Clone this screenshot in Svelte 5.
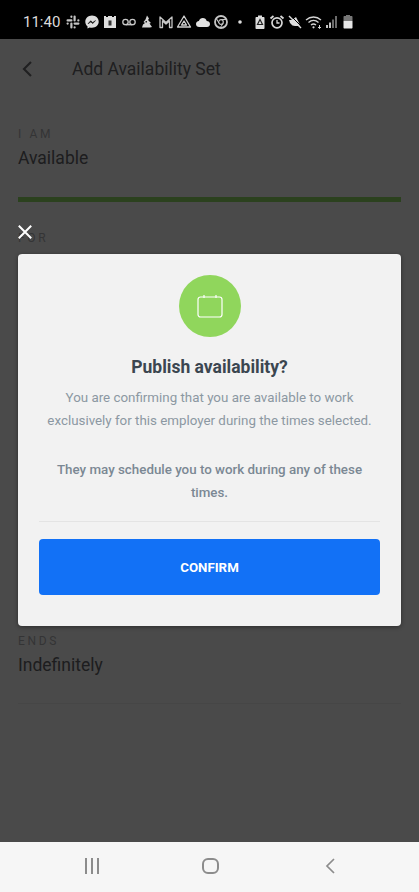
<script lang="ts">
  type Field = { label: string; value?: string };

  const topFields: Field[] = [{ label: 'I AM', value: 'Available' }];
  const modalCopy = 'You are confirming that you are available to work exclusively for this employer during the times selected.';
  const modalNote = 'They may schedule you to work during any of these times.';
</script>

<div class="phone">
  <header class="status">
    <span class="clock">11:40</span>
    <div class="notifs">
      <!-- slack -->
      <svg viewBox="0 0 16 16" fill="none" stroke="#c4c4c4" stroke-width="2.2" stroke-linecap="round"><path d="M6.400 6.400H2.600M9.600 6.400V2.600M9.600 9.600h3.800M6.400 9.600v3.800" /><path d="M6.400 2.700v.1M13.300 6.400h.1M9.600 13.300v.1M2.700 9.600h-.1" /></svg>
      <!-- messenger -->
      <svg viewBox="0 0 16 16"><path d="M8 1.500c-3.900 0-6.700 2.800-6.700 6.200 0 1.900.8 3.500 2.200 4.600v2.300l2.100-1.200c.8.200 1.600.3 2.400.3 3.900 0 6.700-2.800 6.700-6 0-3.400-2.800-6.200-6.700-6.200z" fill="#ddd" /><path d="M4 9.800l2.700-3 2 1.700 2.800-1.900-2.700 3-2-1.700z" fill="#111" stroke="#111" stroke-width=".6" /></svg>
      <!-- calendar -->
      <svg viewBox="0 0 16 16"><path d="M2 2h2v1h2V2h4v1h2V2h2v12H2z" fill="#ddd" /><rect x="6.500" y="6.500" width="3" height="5" fill="#333" /></svg>
      <!-- voicemail -->
      <svg viewBox="0 0 16 16" fill="none" stroke="#c8c8c8" stroke-width="1.300"><circle cx="4.500" cy="8" r="2.700" /><circle cx="11.500" cy="8" r="2.700" /><path d="M4.500 10.700h7" /></svg>
      <!-- app figure -->
      <svg viewBox="0 0 16 16"><path d="M8 1.500l2 3-1 1.500 3 3-1.500.5 2.500 3.500-2 .5H3l1-3 2-1.500-1.500-1 2-2.500z" fill="#d4d4d4" /><rect x="6.500" y="7" width="1.500" height="1.500" fill="#222" /></svg>
      <!-- gmail -->
      <svg viewBox="0 0 16 16" fill="none" stroke="#c8c8c8" stroke-width="1.300" stroke-linejoin="round"><path d="M2 13.500V3l6 5.500L14 3v10.500h-2.500V7L8 10 4.500 7v6.500z" /></svg>
      <!-- drive -->
      <svg viewBox="0 0 16 16" fill="none" stroke="#d0d0d0" stroke-width="1.300" stroke-linejoin="round"><path d="M8 2l6.500 11h-13zM8 7l-2.500 4h5z" /></svg>
      <!-- cloud -->
      <svg viewBox="0 0 16 16"><path d="M4.200 13C2.300 13 1 11.700 1 10s1.300-2.900 2.900-3C4.500 5 6 4 7.800 4c2 0 3.500 1.300 3.900 3.100 1.800 0 3.300 1.200 3.300 3S13.600 13 12 13z" fill="#e2e2e2" /></svg>
      <!-- chrome -->
      <svg viewBox="0 0 16 16" fill="none" stroke="#c4c4c4"><circle cx="8" cy="8" r="6" stroke-width="1.800" /><circle cx="8" cy="8" r="2.300" stroke-width="1.200" /><path d="M8 5.500h5.500M5.800 9L3.500 4.500M10 9.500L7 14" stroke-width="1" /></svg>
      <!-- dot -->
      <svg viewBox="0 0 16 16"><circle cx="8" cy="8" r="1.800" fill="#ddd" /></svg>
    </div>
    <div class="systray">
      <!-- battery saver -->
      <svg viewBox="0 0 16 16"><path d="M6 1.500h4v1.500h1.500c.6 0 1 .4 1 1v10c0 .6-.4 1-1 1h-7c-.6 0-1-.4-1-1V4c0-.6.4-1 1-1H6z" fill="#ddd" /><path d="M8 5.500l2.500 5h-5z" fill="none" stroke="#222" stroke-width="1.200" /></svg>
      <!-- alarm -->
      <svg viewBox="0 0 16 16" fill="none" stroke="#d8d8d8"><circle cx="8" cy="8.800" r="5" stroke-width="1.700" /><path d="M8 6v3h2.500" stroke-width="1.300" /><path d="M1.500 4.500l3-2.500M14.500 4.500l-3-2.500" stroke-width="1.800" /></svg>
      <!-- mute -->
      <svg viewBox="0 0 16 16"><path d="M2 6h3l4-3 4 8-1 1H8l-2.500-.5L3 9z" fill="#ddd" /><path d="M2 2l12 12" stroke="#ddd" stroke-width="1.400" /><path d="M3 1l12 12" stroke="#000" stroke-width="1" /></svg>
      <!-- wifi -->
      <svg class="wifi" viewBox="0 0 18 16" fill="none" stroke="#d4d4d4" stroke-width="1.300"><path d="M1 6c4.500-4 10.500-4 15 0M3.500 8.500c3-2.700 7-2.700 10 0M6 11c1.700-1.400 3.300-1.400 5 0" /><circle cx="8.500" cy="13.300" r="1.100" fill="#d4d4d4" stroke="none" /><path d="M14.500 11v3.500M13 13l1.500 1.500L16 13" stroke-width="1" /></svg>
      <!-- signal -->
      <svg class="signal" viewBox="0 0 14 16"><path d="M1 11h2v3H1zM4 8.500h2V14H4z" fill="#c4c4c4" /><path d="M7 5.500h2V14H7zM10 2h2v12h-2z" fill="#6c6c6c" /></svg>
      <!-- battery -->
      <svg class="battery" viewBox="0 0 10 16"><path d="M3 1h4v1h1.500c.6 0 1 .4 1 1v4H.5V3c0-.6.4-1 1-1H3z" fill="#777" /><path d="M.5 7h9v6.500c0 .6-.4 1-1 1h-7c-.6 0-1-.4-1-1z" fill="#e6e6e6" /></svg>
    </div>
  </header>

  <main class="screen">
    <div class="page">
      <div class="titlebar">
        <svg class="back" viewBox="0 0 12 18" fill="none"><path d="M10 2L3 9l7 7" stroke="#707074" stroke-width="2.200" /></svg>
        <h1>Add Availability Set</h1>
      </div>

      {#each topFields as field}
        <section class="field first">
          <span class="label">{field.label}</span>
          <span class="value">{field.value}</span>
        </section>
      {/each}
      <div class="greenbar"></div>

      <section class="field for">
        <span class="label">FOR</span>
      </section>

      <section class="field">
        <span class="label">ENDS</span>
        <span class="value">Indefinitely</span>
      </section>
      <div class="rule"></div>
    </div>

    <div class="scrim">
      <button class="close" aria-label="Close">
        <svg viewBox="0 0 14 14" fill="none"><path d="M.8.800l12.400 12.400M13.200.800L.8 13.200" stroke="#fff" stroke-width="2" /></svg>
      </button>

      <div class="modal">
        <div class="badge">
          <svg viewBox="0 0 26 24" fill="none" stroke="#fff" stroke-width="1.200"><rect x="1" y="3" width="24" height="20" rx="2.500" /><path d="M7 1v3M19 1v3" /></svg>
        </div>
        <h2>Publish availability?</h2>
        <p>{modalCopy}</p>
        <p class="note">{modalNote}</p>
        <hr />
        <button class="confirm">CONFIRM</button>
      </div>
    </div>
  </main>

  <nav class="navbar">
    <svg class="recents" viewBox="0 0 16 16" fill="none" stroke="#8c8c8c" stroke-width="2"><path d="M2 0v16M8 0v16M14 0v16" /></svg>
    <svg class="home" viewBox="0 0 17 16" fill="none"><rect x="1" y="1" width="15" height="14" rx="5" stroke="#8c8c8c" stroke-width="2" /></svg>
    <svg class="prev" viewBox="0 0 10 16" fill="none"><path d="M9 1L2 8l7 7" stroke="#8c8c8c" stroke-width="1.700" /></svg>
  </nav>
</div>

<style>
  :global(body) {
    background: #fff;
  }

  .phone {
    width: 419px;
    height: 892px;
    display: flex;
    flex-direction: column;
    font-family: Roboto, sans-serif;
    overflow: hidden;
  }

  /* --- STATUS BAR --- */
  .status {
    height: 39px;
    flex: none;
    background: #000;
    display: flex;
    align-items: center;
    padding: 5px 0 0 23px;
    box-sizing: border-box;
  }

  .clock {
    color: #dcdcdc;
    font-size: 15px;
    width: 42px;
    flex: none;
  }

  .notifs {
    display: flex;
    gap: 2.5px;
  }

  .notifs svg,
  .systray svg {
    width: 16px;
    height: 16px;
    flex: none;
  }

  .systray {
    display: flex;
    gap: 1.5px;
    margin-left: 4px;
    align-items: center;
  }

  .systray .wifi {
    width: 18px;
    margin-left: 1px;
  }

  .systray .signal {
    width: 14px;
  }

  .systray .battery {
    width: 10px;
    margin-left: 3px;
  }

  /* --- PAGE UNDER THE SCRIM --- */
  .screen {
    flex: 1;
    position: relative;
    background: #fff;
  }

  .page {
    padding: 0 18px;
  }

  .titlebar {
    height: 60px;
    display: flex;
    align-items: center;
  }

  .back {
    width: 12px;
    height: 18px;
    margin-left: 3px;
    flex: none;
  }

  h1 {
    margin: 0 0 0 39px;
    font-size: 17.5px;
    font-weight: 400;
    color: #6a6a6e;
  }

  .field {
    display: flex;
    flex-direction: column;
  }

  .first {
    margin-top: 28px;
  }

  .label {
    font-size: 12px;
    line-height: 14px;
    letter-spacing: 0.22em;
    color: #b4b4b8;
  }

  .value {
    font-size: 17.5px;
    line-height: 24px;
    margin-top: 5px;
    color: #66666a;
  }

  .greenbar {
    height: 5px;
    margin-top: 27px;
    background: #93e067;
  }

  .for {
    margin-top: 29px;
    height: 403px;
  }

  .rule {
    height: 1px;
    margin-top: 26px;
    background: #f0f0f0;
  }

  /* --- MODAL --- */
  .scrim {
    position: absolute;
    inset: 0;
    background: rgba(0, 0, 0, 0.71);
    padding: 185px 18px 0;
    display: flex;
    flex-direction: column;
    align-items: flex-start;
  }

  .close {
    width: 14px;
    height: 16px;
    padding: 1px 0;
    border: 0;
    background: none;
    margin-bottom: 14px;
    display: block;
  }

  .close svg {
    display: block;
    width: 14px;
    height: 14px;
  }

  .modal {
    width: 383px;
    height: 372px;
    box-sizing: border-box;
    background: #f2f2f2;
    border-radius: 4px;
    box-shadow: 0 1px 4px rgba(0, 0, 0, 0.4);
    padding: 21px 21px 0;
    display: flex;
    flex-direction: column;
    align-items: center;
    text-align: center;
  }

  .badge {
    width: 62px;
    height: 62px;
    border-radius: 50%;
    background: #90d65c;
    display: flex;
    align-items: center;
    justify-content: center;
    flex: none;
  }

  .badge svg {
    width: 26px;
    height: 24px;
  }

  h2 {
    margin: 17px 0 0;
    font-size: 17.5px;
    line-height: 26px;
    font-weight: 700;
    color: #3b4650;
  }

  p {
    margin: 6px -6px 0;
    font-size: 13.35px;
    line-height: 23px;
    color: #8c98a2;
  }

  .note {
    margin: 26px 0 0;
    font-weight: 500;
    color: #7b8894;
  }

  hr {
    width: 100%;
    height: 1px;
    margin: 17px 0 0;
    border: 0;
    background: #e4e4e4;
    flex: none;
  }

  .confirm {
    width: 100%;
    height: 56px;
    margin-top: 17px;
    border: 0;
    border-radius: 4px;
    background: #1271f6;
    color: #fff;
    font-family: inherit;
    font-size: 13.3px;
    font-weight: 700;
    flex: none;
  }

  /* --- NAV BAR --- */
  .navbar {
    height: 50px;
    flex: none;
    background: #f6f6f6;
    display: flex;
    align-items: center;
    padding: 0 0 2px 84px;
    box-sizing: border-box;
  }

  .recents {
    width: 16px;
    height: 16px;
  }

  .home {
    width: 17px;
    height: 16px;
    margin-left: 102px;
  }

  .prev {
    width: 10px;
    height: 16px;
    margin-left: 106px;
  }
</style>
